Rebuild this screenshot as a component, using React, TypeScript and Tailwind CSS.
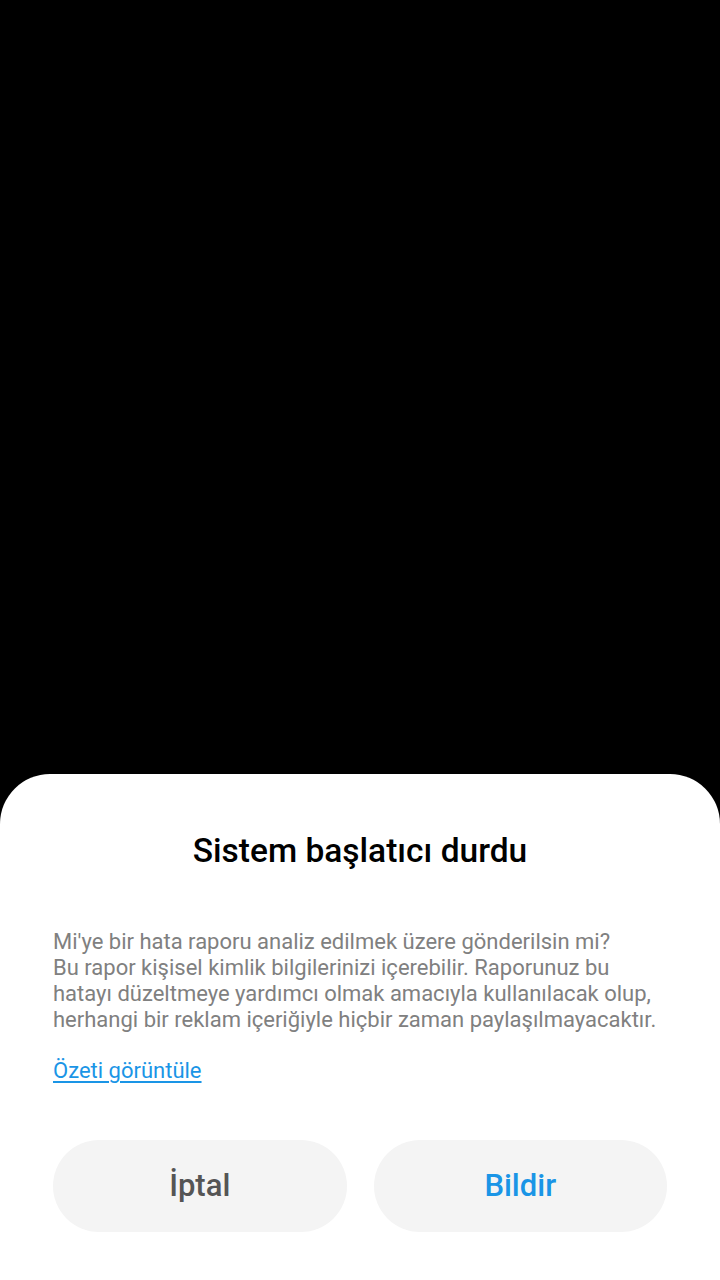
export default function App() {
  return (
    <div className="flex h-[1280px] w-[720px] flex-col bg-black font-['Roboto',sans-serif]">
      <div className="flex-1" />
      <div className="flex h-[506px] flex-col rounded-t-[50px] bg-white px-[53px]">
        <h1 className="mt-[56px] text-center text-[33.5px] font-medium leading-[42px] text-black">
          Sistem başlatıcı durdu
        </h1>
        <p className="mt-[57px] whitespace-nowrap text-[22px] leading-[26px] text-[#808080]">
          Mi'ye bir hata raporu analiz edilmek üzere gönderilsin mi?
          <br />
          Bu rapor kişisel kimlik bilgilerinizi içerebilir. Raporunuz bu
          <br />
          hatayı düzeltmeye yardımcı olmak amacıyla kullanılacak olup,
          <br />
          herhangi bir reklam içeriğiyle hiçbir zaman paylaşılmayacaktır.
        </p>
        <a
          href="#"
          className="mt-[25px] self-start text-[22px] leading-[26px] text-[#1a95e6] underline underline-offset-[3px]"
        >
          Özeti görüntüle
        </a>
        <div className="mt-[56px] grid grid-cols-2 gap-[27px]">
          <button className="h-[92px] rounded-full bg-[#f4f4f4] text-[31px] font-medium text-[#555555]">
            İptal
          </button>
          <button className="h-[92px] rounded-full bg-[#f4f4f4] text-[31px] font-medium text-[#1a95e6]">
            Bildir
          </button>
        </div>
      </div>
    </div>
  );
}
